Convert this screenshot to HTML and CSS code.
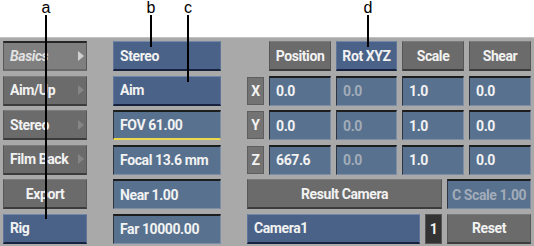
FILE: index.html
```html
<!DOCTYPE html>
<html lang="en">
<head>
    <meta charset="UTF-8">
    <meta name="viewport" content="width=device-width, initial-scale=1.0">
    <title>Camera - Basics</title>
    <link rel="stylesheet" href="styles.css">
</head>
<body>
    <div class="page">

        <!-- callout letters above the panel -->
        <div class="callouts">
            <span class="tag tag-a">a</span>
            <span class="tag tag-b">b</span>
            <span class="tag tag-c">c</span>
            <span class="tag tag-d">d</span>
        </div>
        <div class="leader leader-a"></div>
        <div class="leader leader-b"></div>
        <div class="leader leader-c"></div>
        <div class="leader leader-d"></div>

        <div class="panel">

            <!-- menu tabs -->
            <div class="col col-tabs">
                <div class="btn tab is-current"><span>Basics</span><i class="arrow"></i></div>
                <div class="btn tab"><span>Aim/Up</span><i class="arrow"></i></div>
                <div class="btn tab"><span>Stereo</span><i class="arrow"></i></div>
                <div class="btn tab"><span>Film Back</span><i class="arrow"></i></div>
                <div class="btn center">Export</div>
                <div class="btn blue">Rig</div>
            </div>

            <!-- camera settings -->
            <div class="col col-camera">
                <div class="btn blue">Stereo</div>
                <div class="btn blue">Aim</div>
                <div class="field is-active">FOV 61.00</div>
                <div class="field">Focal 13.6 mm</div>
                <div class="field">Near 1.00</div>
                <div class="field">Far 10000.00</div>
            </div>

            <!-- transform -->
            <div class="col col-xform">
                <div class="xform-grid">
                    <div></div>
                    <div class="btn center">Position</div>
                    <div class="btn blue center">Rot XYZ</div>
                    <div class="btn center">Scale</div>
                    <div class="btn center">Shear</div>

                    <div class="axis">X</div>
                    <div class="field">0.0</div>
                    <div class="field dim">0.0</div>
                    <div class="field">1.0</div>
                    <div class="field">0.0</div>

                    <div class="axis">Y</div>
                    <div class="field">0.0</div>
                    <div class="field dim">0.0</div>
                    <div class="field">1.0</div>
                    <div class="field">0.0</div>

                    <div class="axis">Z</div>
                    <div class="field">667.6</div>
                    <div class="field dim">0.0</div>
                    <div class="field">1.0</div>
                    <div class="field">0.0</div>
                </div>

                <div class="row">
                    <div class="btn center wide">Result Camera</div>
                    <div class="field dim side">C Scale 1.00</div>
                </div>

                <div class="row">
                    <div class="btn blue grow">Camera1</div>
                    <div class="count">1</div>
                    <div class="btn center side">Reset</div>
                </div>
            </div>

        </div>
    </div>
</body>
</html>
```

FILE: styles.css
```css
body {
    margin: 0;
    background-color: #ffffff;
    font-family: Roboto, 'Liberation Sans', sans-serif;
}

.page {
    position: relative;
    width: 534px;
    height: 246px;
    overflow: hidden;
}

/* letters on top */
.callouts {
    position: relative;
    height: 37px;
}

.tag {
    position: absolute;
    top: 0;
    width: 20px;
    text-align: center;
    font-family: 'Liberation Sans', Arial, sans-serif;
    font-size: 16px;
    line-height: 16px;
    color: #000;
}

.tag-a { left: 36px; }
.tag-b { left: 141px; }
.tag-c { left: 178px; }
.tag-d { left: 358px; }

/* the black leader lines */
.leader {
    position: absolute;
    top: 15px;
    width: 2px;
    background-color: #000;
    z-index: 2;
}

.leader-a { left: 45px; height: 204px; }
.leader-b { left: 150px; height: 32px; }
.leader-c { left: 187px; height: 67px; }
.leader-d { left: 367px; height: 32px; }

.panel {
    display: flex;
    gap: 26px;
    height: 209px;
    box-sizing: border-box;
    padding: 3px 3px 0 3px;
    background-color: #a9a9a9;
    border-top: 1px solid #c2c2c2;
}

.col {
    display: flex;
    flex-direction: column;
    gap: 4.5px;
}

.col-tabs { width: 84px; }
.col-camera { width: 108px; }
.col-xform { width: 284px; }

/* buttons and fields */
.btn,
.field,
.axis,
.count {
    box-sizing: border-box;
    height: 30px;
    display: flex;
    align-items: center;
    padding: 0 6px;
    font-size: 14px;
    font-weight: bold;
    letter-spacing: -0.4px;
    color: #f2f2f2;
    white-space: nowrap;
}

.btn {
    background-color: #6b6b6b;
    border: 1px solid #575757;
    border-top-color: #7c7c7c;
    border-bottom: 2px solid #3c3c3c;
}

.btn.center {
    justify-content: center;
}

.btn.blue {
    background-color: #4a6287;
    border-color: #5f769a;
    border-top-color: #7188ab;
    border-bottom: 2px solid #17223f;
}

.tab {
    justify-content: space-between;
    padding-right: 2px;
}

.tab .arrow {
    width: 0;
    height: 0;
    border-top: 5px solid transparent;
    border-bottom: 5px solid transparent;
    border-left: 6px solid #858585;
}

/* the open tab */
.tab.is-current {
    background-color: #7f7f7f;
    border-top: 2px solid #262626;
    border-bottom-color: #6a6a6a;
}

.tab.is-current span {
    font-style: italic;
    color: #e2e2e2;
}

.tab.is-current .arrow {
    border-left-color: #d0d0d0;
}

.field {
    background-color: #57718f;
    border: 1px solid #7d8ea6;
    border-top: 2px solid #1d1d1d;
    border-left-color: #2e3440;
}

.field.is-active {
    border-bottom: 2px solid #ecd94c;
}

.field.dim {
    color: #a2acb8;
}

/* X Y Z rows */
.xform-grid {
    display: grid;
    grid-template-columns: 17px 62px 61px 62px 62px;
    grid-auto-rows: 30px;
    column-gap: 5px;
    row-gap: 4.5px;
}

.axis {
    justify-content: center;
    padding: 0;
    margin-top: 1px;
    height: 28px;
    background-color: #737373;
    border: 1px solid #5e5e5e;
}

.row {
    display: flex;
    gap: 5px;
}

.wide {
    width: 195px;
}

.side {
    width: 84px;
    padding: 0 4px;
}

.grow {
    flex: 1;
}

.count {
    width: 17px;
    padding: 0;
    justify-content: center;
    background-color: #333333;
    border: 1px solid #555555;
}
```
